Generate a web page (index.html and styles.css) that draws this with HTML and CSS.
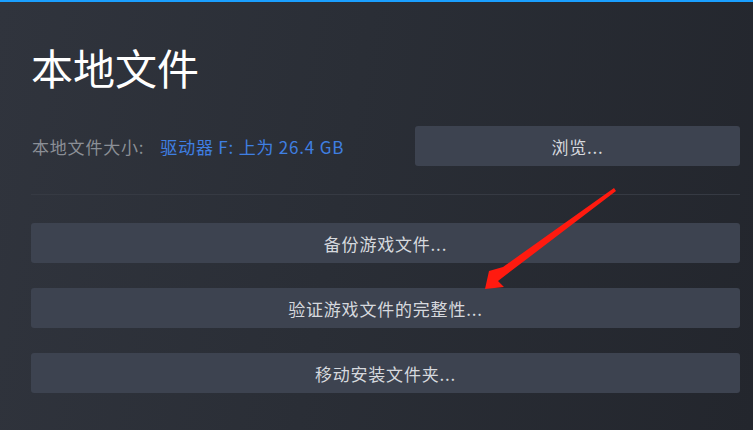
FILE: index.html
```html
<!DOCTYPE html>
<html lang="zh-CN">
<head>
    <meta charset="UTF-8">
    <meta name="viewport" content="width=device-width, initial-scale=1.0">
    <title>本地文件</title>
    <link rel="stylesheet" href="styles.css">
</head>
<body>
    <div class="panel">
        <h1 class="title">本地文件</h1>
        <div class="size-row">
            <div class="size-info">
                <span class="size-label">本地文件大小:</span>
                <span class="size-value">驱动器 F: 上为 26.4 GB</span>
            </div>
            <button class="btn btn-browse">浏览...</button>
        </div>
        <hr class="divider">
        <div class="actions">
            <button class="btn">备份游戏文件...</button>
            <button class="btn">验证游戏文件的完整性...</button>
            <button class="btn">移动安装文件夹...</button>
        </div>
    </div>

    <!-- roter Pfeil über dem Dialog -->
    <svg class="arrow" width="753" height="430" viewBox="0 0 753 430">
        <polygon points="614,188 503,267 489,271 485,289 504,287 498,281 616,191" fill="#ff1a0f"/>
    </svg>
</body>
</html>
```

FILE: styles.css
```css
body {
    margin: 0;
    width: 753px;
    height: 430px;
    overflow: hidden;
    position: relative;
    font-family: "Noto Sans CJK SC", "Noto Sans", sans-serif;
    background: linear-gradient(100deg, #30343d 0%, #2a2e36 45%, #23262d 100%);
    border-top: 2px solid #1a9fff;
    box-sizing: border-box;
}
.panel {
    padding: 45px 13px 0 31px;
}
.title {
    margin: 0 0 39px 0;
    font-size: 42px;
    line-height: 40px;
    font-weight: normal;
    color: #ffffff;
}
.size-row {
    display: flex;
    align-items: center;
    justify-content: space-between;
    height: 40px;
}
.size-info {
    display: flex;
    gap: 16px;
    font-size: 17px;
    letter-spacing: 0.8px;
    padding-left: 1px;
}
.size-label {
    color: #8b8f96;
}
.size-value {
    color: #3f7fe2;
}
.btn {
    display: block;
    height: 40px;
    border: none;
    border-radius: 3px;
    background-color: #3d4350;
    color: #d6d9de;
    font-family: inherit;
    font-size: 17px;
    letter-spacing: 0.8px;
    padding: 0;
    cursor: pointer;
}
.btn-browse {
    width: 325px;
}
.divider {
    margin: 28px 0;
    border: none;
    height: 1px;
    background-color: #363a43;
}
.actions {
    display: flex;
    flex-direction: column;
    gap: 25px;
}
.actions .btn {
    width: 100%;
}
.arrow {
    position: absolute;
    top: -2px;
    left: 0;
    pointer-events: none;
}
```
